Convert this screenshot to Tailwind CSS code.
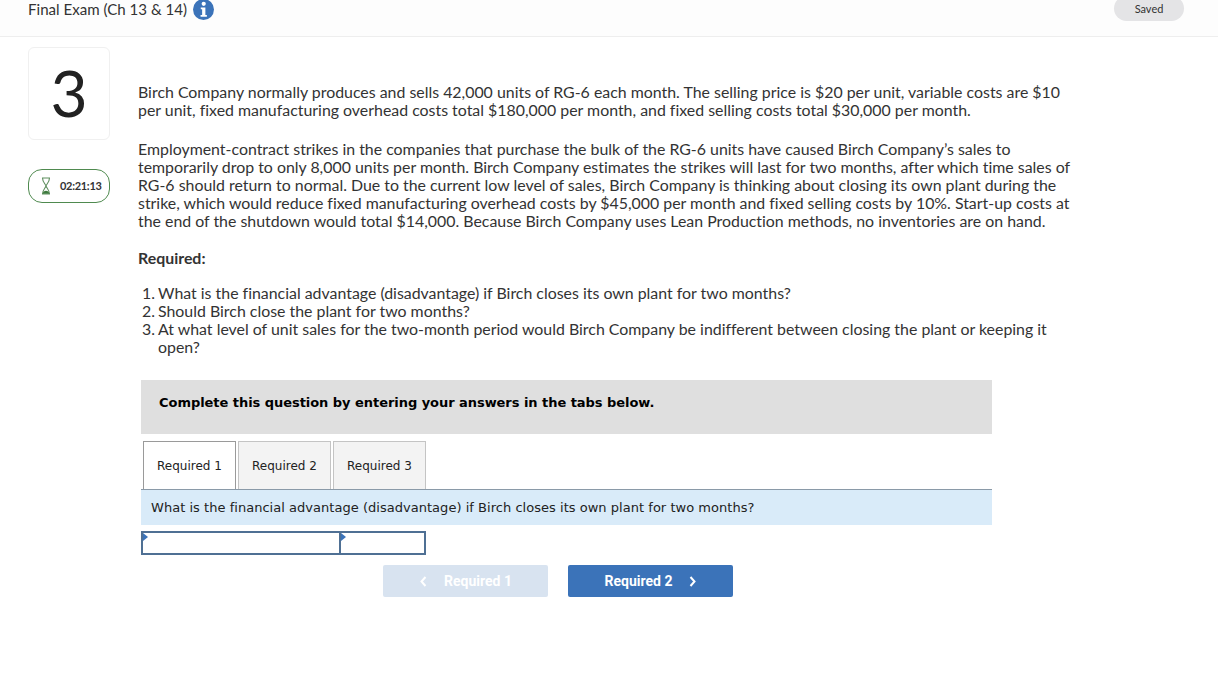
<!DOCTYPE html>
<html lang="en">
<head>
    <meta charset="UTF-8">
    <title>Final Exam (Ch 13 &amp; 14)</title>
    <script src="https://cdn.jsdelivr.net/npm/@tailwindcss/browser@4"></script>
</head>
<body class="bg-white h-screen overflow-hidden font-['Lato',sans-serif] text-[#333] [font-variant-ligatures:none]">
    <!-- top bar -->
    <div class="h-[37px] bg-[#fdfdfd] border-b border-[#eeeeee] flex items-start pl-[28px] pr-[34px]">
        <span class="text-[15.100px] leading-[18px] text-[#333]">Final Exam (Ch 13 &amp; 14)</span>
        <svg class="ml-[6px] -mt-[1px]" width="21" height="21" viewBox="0 0 20 20">
            <circle cx="10" cy="10" r="10" fill="#3b73b9"/>
            <circle cx="10.200" cy="4.600" r="2" fill="#fff"/>
            <path d="M7.400 8h4.400v7.200h1.400V17H7.200v-1.800h1.500V9.800H7.400z" fill="#fff"/>
        </svg>
        <span class="ml-auto -mt-[4px] w-[70px] h-[25px] rounded-full bg-[#e4e4e6] text-[11px] leading-[25px] text-center text-[#333]">Saved</span>
    </div>

    <div class="flex">
        <!-- left column -->
        <div class="w-[138px] pl-[28px] pt-[10px] shrink-0">
            <div class="w-[82px] h-[93px] pb-[2px] border border-[#f0f0f0] rounded-[6px] flex items-center justify-center text-[64px] leading-none text-[#222]">3</div>
            <div class="mt-[29px] w-[82px] h-[34px] border border-[#4f8a4f] rounded-[14px] flex items-center pl-[12px]">
                <svg width="10" height="18" viewBox="0 0 10 18" fill="none">
                    <path d="M1.500 1c0 4 3 6 3.500 8-.5 2-3.500 4-3.500 8M8.500 1c0 4-3 6-3.500 8 .5 2 3.500 4 3.500 8M1 1h8M1 17h8" stroke="#5f8f5f" stroke-width="1.100"/>
                    <path d="M1.500 16.800c.5-2 2-3 3.500-3s3 1 3.500 3z" fill="#3d7a3d"/>
                </svg>
                <span class="ml-[9px] text-[11px] font-bold tracking-[-0.3px] text-[#333]">02:21:13</span>
            </div>
        </div>

        <!-- question -->
        <div class="flex-1 pt-[46px]">
            <div class="text-[15.900px] leading-[18px] text-[#333] whitespace-nowrap">
                <p>Birch Company normally produces and sells 42,000 units of RG-6 each month. The selling price is $20 per unit, variable costs are $10<br>per unit, fixed manufacturing overhead costs total $180,000 per month, and fixed selling costs total $30,000 per month.</p>
                <p class="mt-[21px]">Employment-contract strikes in the companies that purchase the bulk of the RG-6 units have caused Birch Company’s sales to<br>temporarily drop to only 8,000 units per month. Birch Company estimates the strikes will last for two months, after which time sales of<br>RG-6 should return to normal. Due to the current low level of sales, Birch Company is thinking about closing its own plant during the<br>strike, which would reduce fixed manufacturing overhead costs by $45,000 per month and fixed selling costs by 10%. Start-up costs at<br>the end of the shutdown would total $14,000. Because Birch Company uses Lean Production methods, no inventories are on hand.</p>
                <p class="mt-[19px] font-bold">Required:</p>
                <ol class="mt-[17px] ml-[4px]">
                    <li class="flex"><span class="w-[16px]">1.</span><span>What is the financial advantage (disadvantage) if Birch closes its own plant for two months?</span></li>
                    <li class="flex"><span class="w-[16px]">2.</span><span>Should Birch close the plant for two months?</span></li>
                    <li class="flex"><span class="w-[16px]">3.</span><span>At what level of unit sales for the two-month period would Birch Company be indifferent between closing the plant or keeping it<br>open?</span></li>
                </ol>
            </div>

            <div class="ml-[3px] w-[851px] font-['DejaVu_Sans',sans-serif]">
                <div class="mt-[24px] h-[54px] bg-[#dfdfdf] pl-[18px] pt-[14px] text-[13px] tracking-[-0.045px] leading-[17px] font-bold text-black">Complete this question by entering your answers in the tabs below.</div>

                <div class="mt-[7px] flex gap-[2px] pl-[2px] h-[48px] text-[12px] text-[#222]">
                    <div class="w-[93px] bg-white border border-b-0 border-[#9a9a9a] flex items-center justify-center">Required 1</div>
                    <div class="w-[93px] bg-[#f3f3f3] border border-b-0 border-[#c4c4c4] flex items-center justify-center">Required 2</div>
                    <div class="w-[93px] bg-[#f3f3f3] border border-b-0 border-[#c4c4c4] flex items-center justify-center">Required 3</div>
                </div>
                <div class="h-[36px] bg-[#d9ebf9] border-t border-[#8a9aa8] pl-[10px] text-[13px] tracking-[0.03px] leading-[36px] text-[#222]">What is the financial advantage (disadvantage) if Birch closes its own plant for two months?</div>

                <div class="mt-[6px] flex w-[285px] h-[24px] border-2 border-[#4f7094]">
                    <div class="relative w-[198px] border-r-2 border-[#4f7094]">
                        <span class="absolute left-0 top-0 border-y-[4px] border-l-[5px] border-y-transparent border-l-[#3b73b9]"></span>
                    </div>
                    <div class="relative flex-1">
                        <span class="absolute left-0 top-0 border-y-[4px] border-l-[5px] border-y-transparent border-l-[#3b73b9]"></span>
                    </div>
                </div>

                <div class="mt-[10px] ml-[242px] flex gap-[20px] font-['Roboto',sans-serif] text-[14px] font-bold text-white">
                    <div class="w-[165px] h-[32px] rounded-[2px] bg-[#d8e3f0] flex items-center justify-center gap-[17px] pl-[1px]">
                        <svg width="7" height="11" viewBox="0 0 7 11" fill="none"><path d="M5.500 1 1.500 5.500l4 4.500" stroke="#fff" stroke-width="2"/></svg>
                        <span>Required 1</span>
                    </div>
                    <div class="w-[165px] h-[32px] rounded-[2px] bg-[#3b73b9] flex items-center justify-center gap-[17px]">
                        <span>Required 2</span>
                        <svg width="7" height="11" viewBox="0 0 7 11" fill="none"><path d="M1.500 1l4 4.500-4 4.500" stroke="#fff" stroke-width="2"/></svg>
                    </div>
                </div>
            </div>
        </div>
    </div>
</body>
</html>
